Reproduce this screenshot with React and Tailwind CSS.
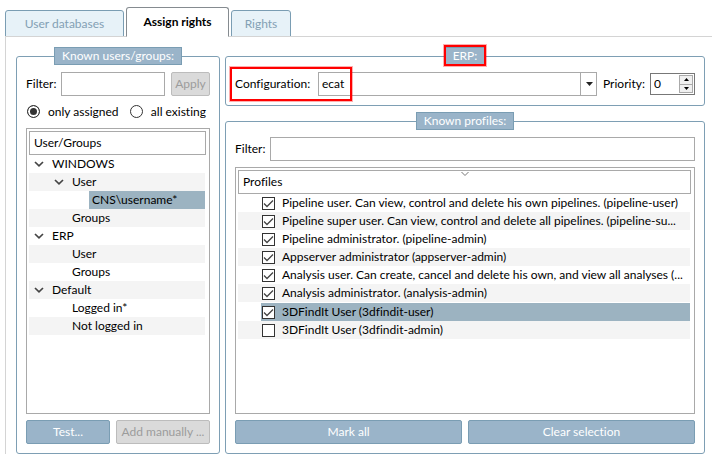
import { useState } from "react";
import clsx from "clsx";

const tabs = [
    { id: "databases", label: "User databases", width: "w-[119px]" },
    { id: "assign", label: "Assign rights", width: "w-[103px]" },
    { id: "rights", label: "Rights", width: "w-[60px]" },
];

const users = [
    { id: "windows", label: "WINDOWS", level: 0, open: true },
    { id: "windows-user", label: "User", level: 1, open: true },
    { id: "username", label: "CNS\\username*", level: 2 },
    { id: "windows-groups", label: "Groups", level: 1 },
    { id: "erp", label: "ERP", level: 0, open: true },
    { id: "erp-user", label: "User", level: 1 },
    { id: "erp-groups", label: "Groups", level: 1 },
    { id: "default", label: "Default", level: 0, open: true },
    { id: "logged-in", label: "Logged in*", level: 1 },
    { id: "not-logged-in", label: "Not logged in", level: 1 },
];

const indents = ["pl-[3px]", "pl-[23px]", "pl-[60px]"];

const profiles = [
    { id: "pipeline-user", label: "Pipeline user. Can view, control and delete his own pipelines. (pipeline-user)" },
    { id: "pipeline-su", label: "Pipeline super user. Can view, control and delete all pipelines. (pipeline-su..." },
    { id: "pipeline-admin", label: "Pipeline administrator. (pipeline-admin)" },
    { id: "appserver-admin", label: "Appserver administrator (appserver-admin)" },
    { id: "analysis-user", label: "Analysis user. Can create, cancel and delete his own, and view all analyses (..." },
    { id: "analysis-admin", label: "Analysis administrator. (analysis-admin)" },
    { id: "3dfindit-user", label: "3DFindIt User (3dfindit-user)" },
    { id: "3dfindit-admin", label: "3DFindIt User (3dfindit-admin)" },
];

function Group({ title, marked, className, children }) {
    return (
        <fieldset className={clsx("min-w-0 rounded-[3px] border border-[#7e9fb4] px-[9px] pt-[7px]", className)}>
            <legend className="relative mx-auto h-[18px] border border-[#7a9db3] bg-[#9ab4c9] px-[7px] leading-4 text-white">
                {title}
                {marked && <span className="absolute -inset-x-[2px] -top-[3px] -bottom-[2px] border-2 border-[#ff0000] shadow-[0_0_0_1px_#ff000050]" />}
            </legend>
            {children}
        </fieldset>
    );
}

function Button({ disabled, className, ...props }) {
    return (
        <button
            type="button"
            disabled={disabled}
            className={clsx(
                "h-6 rounded-[2px] border whitespace-nowrap",
                disabled ? "border-[#bcbcbc] bg-[#dadada] text-[#9c9c9c]" : "border-[#7a9db3] bg-[#9ab4c9] text-white",
                className
            )}
            {...props}
        />
    );
}

function Radio({ label, ...props }) {
    return (
        <label className="flex items-center gap-2 whitespace-nowrap">
            <input
                type="radio"
                name="scope"
                className="size-[13px] appearance-none rounded-full border border-[#333] bg-white checked:bg-[#333] checked:shadow-[inset_0_0_0_2px_#fff]"
                {...props}
            />
            {label}
        </label>
    );
}

function TreeRow({ item, striped, selected, onSelect }) {
    return (
        <li className={clsx("mr-[2px] flex h-[18px]", striped && "bg-[#f4f4f4]", indents[item.level], item.level === 2 && "bg-white")}>
            {item.level < 2 && (
                <span className="flex w-5 shrink-0 items-center pl-[2px]">
                    {item.open && (
                        <svg width="10" height="6" viewBox="0 0 10 6" fill="none" stroke="#444" strokeWidth="1.7">
                            <path d="M1 1l4 3.8L9 1" />
                        </svg>
                    )}
                </span>
            )}
            <button
                type="button"
                onClick={onSelect}
                className={clsx("flex-1 text-left leading-[18px] whitespace-nowrap", item.level === 2 && "pl-[3px]", selected && "bg-[#9cb3c1]")}
            >
                {item.label}
            </button>
        </li>
    );
}

function ProfileRow({ item, striped, selected, checked, onToggle }) {
    return (
        <li className={clsx("mr-[2px] flex h-[18px] pl-[23px]", striped && "bg-[#f4f4f4]", selected && "mt-px bg-white")}>
            <label className={clsx("flex min-w-0 flex-1 items-center gap-[7px] pl-px", selected && "bg-[#9cb3c1]")}>
                <span className="grid shrink-0">
                    <input
                        type="checkbox"
                        checked={checked}
                        onChange={onToggle}
                        className="col-start-1 row-start-1 size-[13px] appearance-none border border-[#333] bg-white"
                    />
                    {checked && (
                        <svg className="pointer-events-none col-start-1 row-start-1" width="13" height="13" viewBox="0 0 13 13" fill="none" stroke="#444" strokeWidth="1.3">
                            <path d="M2 6.5l3 3 6-6" />
                        </svg>
                    )}
                </span>
                <span className="whitespace-nowrap">{item.label}</span>
            </label>
        </li>
    );
}

export default function App() {
    const [tab, setTab] = useState("assign");
    const [scope, setScope] = useState("assigned");
    const [user, setUser] = useState("username");
    const [priority, setPriority] = useState(0);
    const [checked, setChecked] = useState(profiles.slice(0, 7).map((p) => p.id));

    const toggle = (id) => {
        setChecked(checked.includes(id) ? checked.filter((c) => c !== id) : [...checked, id]);
    };

    return (
        <div className="flex min-h-screen flex-col bg-white pt-[7px] pl-[5px] font-[Lato,sans-serif] text-[12px] leading-4 text-black [font-variant-ligatures:none]">
            <nav className="flex h-[29px] items-end gap-[2px]" role="tablist">
                {tabs.map((t) => (
                    <button
                        key={t.id}
                        type="button"
                        role="tab"
                        aria-selected={tab === t.id}
                        onClick={() => setTab(t.id)}
                        className={clsx(
                            "shrink-0 rounded-t-[3px] border whitespace-nowrap",
                            t.width,
                            tab === t.id
                                ? "z-10 -mb-px h-[30px] border-[#858b90] border-b-white bg-white font-bold"
                                : "-mb-px h-[27px] border-[#7a9db3] bg-[#e7f2f8] pt-px text-[#83a0b4]"
                        )}
                    >
                        {t.label}
                    </button>
                ))}
            </nav>

            <main className="flex flex-1 gap-[5px] border-t border-l border-[#d4d4d4] pt-[10px] pr-[7px] pl-[10px]">
                <Group title="Known users/groups:" className="flex w-[204px] shrink-0 flex-col pb-[9px]">
                    <div className="flex items-center">
                        <label htmlFor="user-filter" className="w-[35px] shrink-0">Filter:</label>
                        <input id="user-filter" type="text" className="h-6 min-w-0 flex-1 border border-[#a9a9a9] px-1" />
                        <Button disabled className="ml-[6px] w-[39px]">Apply</Button>
                    </div>
                    <div className="mt-[7px] mb-2 flex h-[17px] items-center justify-between pr-1 pl-px">
                        <Radio label="only assigned" checked={scope === "assigned"} onChange={() => setScope("assigned")} />
                        <Radio label="all existing" checked={scope === "all"} onChange={() => setScope("all")} />
                    </div>
                    <div className="flex-1 border border-[#a9a9a9] p-[2px]">
                        <div className="mr-px h-6 border border-[#a9a9a9] px-1 leading-[22px]">User/Groups</div>
                        <ul>
                            {users.map((item, i) => (
                                <TreeRow
                                    key={item.id}
                                    item={item}
                                    striped={i % 2 === 1}
                                    selected={user === item.id}
                                    onSelect={() => setUser(item.id)}
                                />
                            ))}
                        </ul>
                    </div>
                    <div className="mt-[6px] flex gap-[6px]">
                        <Button className="w-[84px]">Test...</Button>
                        <Button disabled className="flex-1">Add manually ...</Button>
                    </div>
                </Group>

                <div className="flex min-w-0 flex-1 flex-col gap-[6px]">
                    <Group title="ERP:" marked className="pb-[9px]">
                        <div className="flex items-center">
                            <div className="relative flex min-w-0 flex-1 items-center">
                                <label htmlFor="configuration" className="w-[83px] shrink-0">Configuration:</label>
                                <div className="grid min-w-0 flex-1">
                                    <select
                                        id="configuration"
                                        className="col-start-1 row-start-1 h-6 w-full appearance-none border border-[#a9a9a9] bg-white px-[3px]"
                                    >
                                        <option>ecat</option>
                                    </select>
                                    <span className="pointer-events-none col-start-1 row-start-1 flex w-[17px] items-center justify-center justify-self-end border-l border-[#a9a9a9]">
                                        <svg width="7" height="4" viewBox="0 0 7 4" fill="#222">
                                            <path d="M0 0h7L3.500 4z" />
                                        </svg>
                                    </span>
                                </div>
                                <span className="pointer-events-none absolute -top-[5px] -left-[5px] h-[34px] w-[122px] border-2 border-[#ff0000] shadow-[0_0_0_1px_#ff000050]" />
                            </div>
                            <label htmlFor="priority" className="ml-[6px] w-[47px] shrink-0">Priority:</label>
                            <div className="flex h-[22px] w-[45px] shrink-0 border border-[#777] p-px">
                                <input
                                    id="priority"
                                    type="text"
                                    inputMode="numeric"
                                    value={priority}
                                    onChange={(e) => setPriority(Number(e.target.value) || 0)}
                                    className="min-w-0 flex-1 px-[2px]"
                                />
                                <div className="flex w-[14px] flex-col border border-[#aaa] bg-[#f0f0f0]">
                                    <button type="button" aria-label="Increase" onClick={() => setPriority(priority + 1)} className="flex flex-1 items-center justify-center border-b border-[#aaa]">
                                        <svg width="5" height="3" viewBox="0 0 5 3"><path d="M0 3h5L2.500 0z" /></svg>
                                    </button>
                                    <button type="button" aria-label="Decrease" onClick={() => setPriority(priority - 1)} className="flex flex-1 items-center justify-center">
                                        <svg width="5" height="3" viewBox="0 0 5 3"><path d="M0 0h5L2.500 3z" /></svg>
                                    </button>
                                </div>
                            </div>
                        </div>
                    </Group>

                    <Group title="Known profiles:" className="flex flex-1 flex-col pb-[9px]">
                        <div className="flex items-center">
                            <label htmlFor="profile-filter" className="w-[35px] shrink-0">Filter:</label>
                            <input id="profile-filter" type="text" className="h-6 min-w-0 flex-1 border border-[#a9a9a9] px-1" />
                        </div>
                        <div className="mt-[6px] flex-1 border border-[#a9a9a9] p-[2px]">
                            <div className="relative mr-px h-6 border border-[#a9a9a9] px-1 leading-[22px]">
                                Profiles
                                <svg className="absolute top-px left-1/2 -translate-x-1/2" width="8" height="4" viewBox="0 0 8 4" fill="none" stroke="#777">
                                    <path d="M.5 0L4 3.500 7.500 0" />
                                </svg>
                            </div>
                            <ul>
                                {profiles.map((item, i) => (
                                    <ProfileRow
                                        key={item.id}
                                        item={item}
                                        striped={i % 2 === 1}
                                        selected={item.id === "3dfindit-user"}
                                        checked={checked.includes(item.id)}
                                        onToggle={() => toggle(item.id)}
                                    />
                                ))}
                            </ul>
                        </div>
                        <div className="mt-[6px] flex gap-[6px]">
                            <Button className="flex-1" onClick={() => setChecked(profiles.map((p) => p.id))}>Mark all</Button>
                            <Button className="flex-1" onClick={() => setChecked([])}>Clear selection</Button>
                        </div>
                    </Group>
                </div>
            </main>
        </div>
    );
}
